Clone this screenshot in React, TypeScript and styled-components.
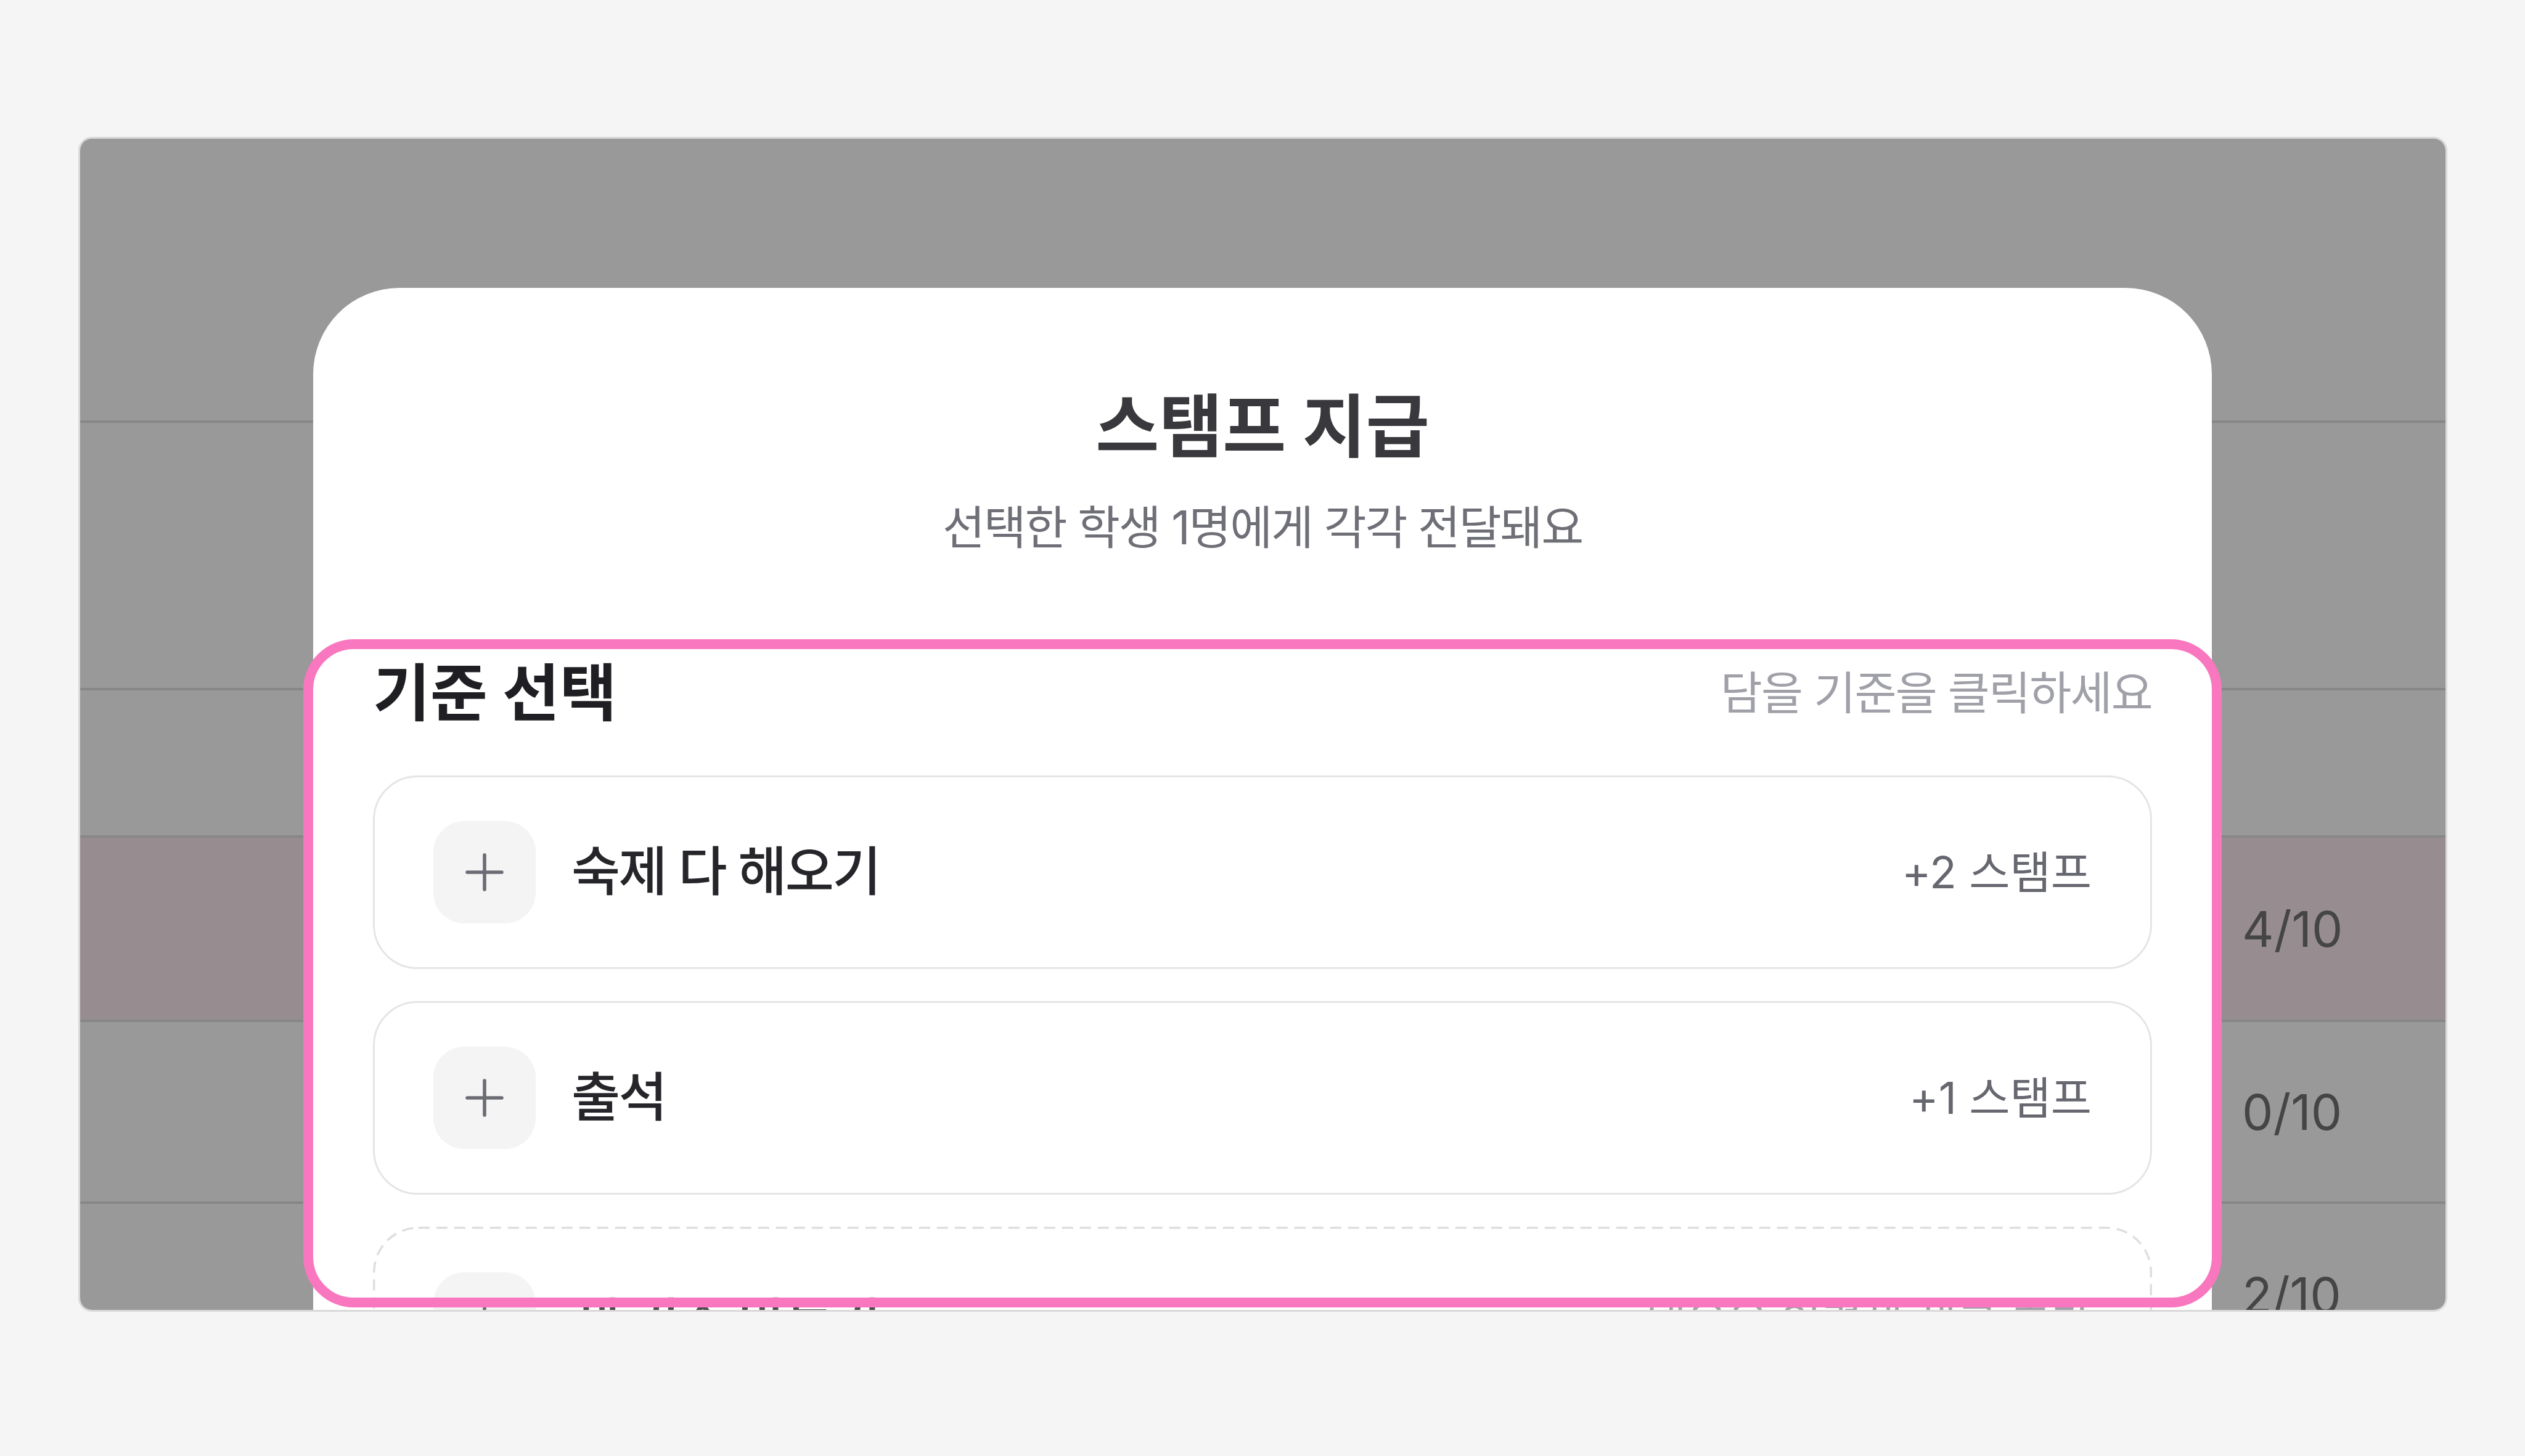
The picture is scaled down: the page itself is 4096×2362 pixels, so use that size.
import React from "react";
import styled, { createGlobalStyle } from "styled-components";

const GlobalStyle = createGlobalStyle`
  html, body { margin: 0; padding: 0; background: #f5f5f5; }
  body { font-family: Inter, "Noto Sans CJK KR", sans-serif; }
  *, *::before, *::after { box-sizing: border-box; }
`;

const Page = styled.div`
  width: 4096px;
  height: 2362px;
  background: #f5f5f5;
  padding: 222px 126px 0 127px;
  overflow: hidden;
`;

const Frame = styled.div`
  position: relative;
  width: 3843px;
  height: 1906px;
  border: 3px solid #d9d9d9;
  border-radius: 22px;
  overflow: hidden;
  background: #ffffff;
`;

const Table = styled.div`
  display: flex;
  flex-direction: column;
`;

const Block = styled.div<{ $h: number }>`
  height: ${(p) => p.$h}px;
  flex-shrink: 0;
  border-bottom: 4px solid #e2e2e2;
`;

const DataRow = styled.div<{ $h: number; $active?: boolean }>`
  height: ${(p) => p.$h}px;
  flex-shrink: 0;
  display: flex;
  align-items: center;
  border-bottom: 4px solid #e2e2e2;
  background: ${(p) => (p.$active ? "#fcebf0" : "#ffffff")};
`;

const Progress = styled.div`
  margin-left: auto;
  width: 330px;
  font-size: 80px;
  line-height: 1;
  color: #737373;
`;

const Overlay = styled.div`
  position: absolute;
  inset: 0;
  background: rgba(0, 0, 0, 0.4);
`;

const Modal = styled.div`
  position: absolute;
  left: 378px;
  top: 242px;
  width: 3080px;
  height: 1900px;
  background: #ffffff;
  border-radius: 140px 140px 0 0;
  padding: 152px 97px 0;
  display: flex;
  flex-direction: column;
`;

const Title = styled.h2`
  margin: 0;
  text-align: center;
  font-size: 112px;
  line-height: 146px;
  font-weight: 700;
  color: #38383d;
`;

const Subtitle = styled.p`
  margin: 38px 0 0;
  text-align: center;
  font-size: 75px;
  line-height: 105px;
  font-weight: 400;
  color: #6f7077;
  letter-spacing: -0.03em;
`;

const Section = styled.section`
  margin-top: 145px;
  padding-top: 6px;
  display: flex;
  flex-direction: column;
`;

const SectionHeader = styled.div`
  display: flex;
  align-items: center;
  justify-content: space-between;
  height: 130px;
`;

const SectionTitle = styled.h3`
  margin: 0;
  font-size: 101px;
  line-height: 130px;
  font-weight: 700;
  color: #1f1f23;
`;

const Hint = styled.span`
  font-size: 74px;
  line-height: 1.3;
  color: #a0a1a8;
  letter-spacing: -0.025em;
`;

const List = styled.div`
  margin-top: 69px;
  display: flex;
  flex-direction: column;
  gap: 52px;
`;

const Criterion = styled.div<{ $dashed?: boolean }>`
  position: relative;
  height: 314px;
  flex-shrink: 0;
  border: 3px solid ${(p) => (p.$dashed ? "transparent" : "#e5e5e7")};
  border-radius: 72px;
  display: flex;
  align-items: center;
  padding: 0 95px;
`;

const DashedOutline = styled.svg`
  position: absolute;
  inset: -3px;
  width: calc(100% + 6px);
  height: calc(100% + 6px);
  pointer-events: none;
  overflow: visible;
`;

const AddIcon = styled.span`
  width: 166px;
  height: 166px;
  border-radius: 50px;
  background: #f4f4f5;
  display: flex;
  align-items: center;
  justify-content: center;
  flex-shrink: 0;
`;

const Label = styled.span<{ $muted?: boolean }>`
  margin-left: 58px;
  font-size: 86px;
  line-height: 1.3;
  font-weight: 500;
  color: ${(p) => (p.$muted ? "#4a4b51" : "#26262a")};
  letter-spacing: -0.03em;
`;

const Reward = styled.span<{ $muted?: boolean }>`
  margin-left: auto;
  font-size: 72px;
  line-height: 1.3;
  color: ${(p) => (p.$muted ? "#a0a1a8" : "#66676f")};
`;

const Highlight = styled.div`
  position: absolute;
  left: -16px;
  top: 570px;
  width: 3112px;
  height: 1084px;
  border: 16px solid #f977bf;
  border-radius: 82px;
  pointer-events: none;
`;

const PlusGlyph = () => (
  <svg width="64" height="64" viewBox="0 0 64 64" fill="none">
    <path d="M4 32H60M32 4V60" stroke="#6a6b73" strokeWidth="5.5" strokeLinecap="round" />
  </svg>
);

const criteria = [
  { label: "숙제 다 해오기", reward: "+2 스탬프" },
  { label: "출석", reward: "+1 스탬프" },
];

export default function App() {
  return (
    <>
      <GlobalStyle />
      <Page>
        <Frame>
          <Table>
            <Block $h={461} />
            <Block $h={434} />
            <Block $h={239} />
            <DataRow $h={299} $active>
              <Progress>4/10</Progress>
            </DataRow>
            <DataRow $h={295}>
              <Progress>0/10</Progress>
            </DataRow>
            <DataRow $h={299}>
              <Progress>2/10</Progress>
            </DataRow>
          </Table>
          <Overlay />
          <Modal>
            <Title>스탬프 지급</Title>
            <Subtitle>선택한 학생 1명에게 각각 전달돼요</Subtitle>
            <Section>
              <SectionHeader>
                <SectionTitle>기준 선택</SectionTitle>
                <Hint>담을 기준을 클릭하세요</Hint>
              </SectionHeader>
              <List>
                {criteria.map((c) => (
                  <Criterion key={c.label}>
                    <AddIcon>
                      <PlusGlyph />
                    </AddIcon>
                    <Label>{c.label}</Label>
                    <Reward>{c.reward}</Reward>
                  </Criterion>
                ))}
                <Criterion $dashed>
                  <DashedOutline>
                    <rect
                      x="1.75"
                      y="1.75"
                      style={{ width: "calc(100% - 3.5px)", height: "calc(100% - 3.5px)" }}
                      rx="72"
                      ry="72"
                      fill="none"
                      stroke="#dedee1"
                      strokeWidth="3.5"
                      strokeDasharray="18 11"
                    />
                  </DashedOutline>
                  <AddIcon>
                    <PlusGlyph />
                  </AddIcon>
                  <Label $muted>새 기준 만들기</Label>
                  <Reward $muted>내용을 입력해 새로 추가</Reward>
                </Criterion>
              </List>
            </Section>
            <Highlight />
          </Modal>
        </Frame>
      </Page>
    </>
  );
}
